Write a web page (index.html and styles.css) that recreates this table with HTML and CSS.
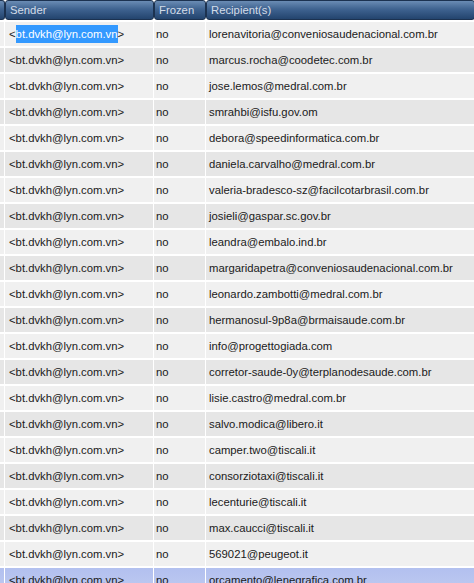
FILE: index.html
```html
<!DOCTYPE html>
<html>
<head>
<meta charset="utf-8">
<link rel="stylesheet" href="styles.css">
</head>
<body>
<div class="grid">
  <div class="hd"></div><div class="hd">Sender</div><div class="hd">Frozen</div><div class="hd">Recipient(s)</div>

  <div class="c r0"></div><div class="c r0 s">&lt;<span class="sel">bt.dvkh@lyn.com.vn</span>&gt;</div><div class="c r0 f">no</div><div class="c r0 r">lorenavitoria@conveniosaudenacional.com.br</div>
  <div class="c r1"></div><div class="c r1 s">&lt;bt.dvkh@lyn.com.vn&gt;</div><div class="c r1 f">no</div><div class="c r1 r">marcus.rocha@coodetec.com.br</div>
  <div class="c r0"></div><div class="c r0 s">&lt;bt.dvkh@lyn.com.vn&gt;</div><div class="c r0 f">no</div><div class="c r0 r">jose.lemos@medral.com.br</div>
  <div class="c r1"></div><div class="c r1 s">&lt;bt.dvkh@lyn.com.vn&gt;</div><div class="c r1 f">no</div><div class="c r1 r">smrahbi@isfu.gov.om</div>
  <div class="c r0"></div><div class="c r0 s">&lt;bt.dvkh@lyn.com.vn&gt;</div><div class="c r0 f">no</div><div class="c r0 r">debora@speedinformatica.com.br</div>
  <div class="c r1"></div><div class="c r1 s">&lt;bt.dvkh@lyn.com.vn&gt;</div><div class="c r1 f">no</div><div class="c r1 r">daniela.carvalho@medral.com.br</div>
  <div class="c r0"></div><div class="c r0 s">&lt;bt.dvkh@lyn.com.vn&gt;</div><div class="c r0 f">no</div><div class="c r0 r">valeria-bradesco-sz@facilcotarbrasil.com.br</div>
  <div class="c r1"></div><div class="c r1 s">&lt;bt.dvkh@lyn.com.vn&gt;</div><div class="c r1 f">no</div><div class="c r1 r">josieli@gaspar.sc.gov.br</div>
  <div class="c r0"></div><div class="c r0 s">&lt;bt.dvkh@lyn.com.vn&gt;</div><div class="c r0 f">no</div><div class="c r0 r">leandra@embalo.ind.br</div>
  <div class="c r1"></div><div class="c r1 s">&lt;bt.dvkh@lyn.com.vn&gt;</div><div class="c r1 f">no</div><div class="c r1 r">margaridapetra@conveniosaudenacional.com.br</div>
  <div class="c r0"></div><div class="c r0 s">&lt;bt.dvkh@lyn.com.vn&gt;</div><div class="c r0 f">no</div><div class="c r0 r">leonardo.zambotti@medral.com.br</div>
  <div class="c r1"></div><div class="c r1 s">&lt;bt.dvkh@lyn.com.vn&gt;</div><div class="c r1 f">no</div><div class="c r1 r">hermanosul-9p8a@brmaisaude.com.br</div>
  <div class="c r0"></div><div class="c r0 s">&lt;bt.dvkh@lyn.com.vn&gt;</div><div class="c r0 f">no</div><div class="c r0 r">info@progettogiada.com</div>
  <div class="c r1"></div><div class="c r1 s">&lt;bt.dvkh@lyn.com.vn&gt;</div><div class="c r1 f">no</div><div class="c r1 r">corretor-saude-0y@terplanodesaude.com.br</div>
  <div class="c r0"></div><div class="c r0 s">&lt;bt.dvkh@lyn.com.vn&gt;</div><div class="c r0 f">no</div><div class="c r0 r">lisie.castro@medral.com.br</div>
  <div class="c r1"></div><div class="c r1 s">&lt;bt.dvkh@lyn.com.vn&gt;</div><div class="c r1 f">no</div><div class="c r1 r">salvo.modica@libero.it</div>
  <div class="c r0"></div><div class="c r0 s">&lt;bt.dvkh@lyn.com.vn&gt;</div><div class="c r0 f">no</div><div class="c r0 r">camper.two@tiscali.it</div>
  <div class="c r1"></div><div class="c r1 s">&lt;bt.dvkh@lyn.com.vn&gt;</div><div class="c r1 f">no</div><div class="c r1 r">consorziotaxi@tiscali.it</div>
  <div class="c r0"></div><div class="c r0 s">&lt;bt.dvkh@lyn.com.vn&gt;</div><div class="c r0 f">no</div><div class="c r0 r">lecenturie@tiscali.it</div>
  <div class="c r1"></div><div class="c r1 s">&lt;bt.dvkh@lyn.com.vn&gt;</div><div class="c r1 f">no</div><div class="c r1 r">max.caucci@tiscali.it</div>
  <div class="c r0"></div><div class="c r0 s">&lt;bt.dvkh@lyn.com.vn&gt;</div><div class="c r0 f">no</div><div class="c r0 r">569021@peugeot.it</div>
  <div class="c rs"></div><div class="c rs s">&lt;bt.dvkh@lyn.com.vn&gt;</div><div class="c rs f">no</div><div class="c rs r">orcamento@lenegrafica.com.br</div>
</div>
</body>
</html>
```

FILE: styles.css
```css
html, body {
  margin: 0;
  padding: 0;
  background: #ffffff;
  overflow: hidden;
}
body {
  width: 474px;
  height: 583px;
  font-family: "Liberation Sans", Arial, sans-serif;
  font-size: 11.3px;
}
.grid {
  display: grid;
  grid-template-columns: 4px 148px 51px 1fr;
  grid-auto-rows: 24px;
  grid-template-rows: 20px;
  column-gap: 1px;
  row-gap: 2px;
  background: #ffffff;
}
.hd {
  height: 20px;
  box-sizing: border-box;
  background: linear-gradient(to bottom, #6a8cb4 0%, #3f6390 45%, #23446e 100%);
  border: 1px solid #1c3250;
  border-radius: 3px;
  color: #d3dce8;
  padding: 3px 0 0 4px;
  line-height: 13px;
  white-space: nowrap;
  overflow: hidden;
  margin-bottom: -2px;
  margin-right: -1px;
}
.grid > .hd:first-child {
  border-radius: 0 3px 3px 0;
  border-left: none;
}
.c {
  line-height: 24px;
  color: #1a1a1a;
  white-space: nowrap;
  overflow: hidden;
}
.r0 { background: #f0f0f0; }
.r1 { background: #e6e6e6; }
.rs { background: linear-gradient(to bottom, #b2c0ef, #bfcaf0); }
.s { padding-left: 4px; }
.f { padding-left: 2px; }
.r { padding-left: 3px; }
.sel {
  background: #3399ff;
  color: #ffffff;
  padding: 3px 0 3px 0;
}
```
